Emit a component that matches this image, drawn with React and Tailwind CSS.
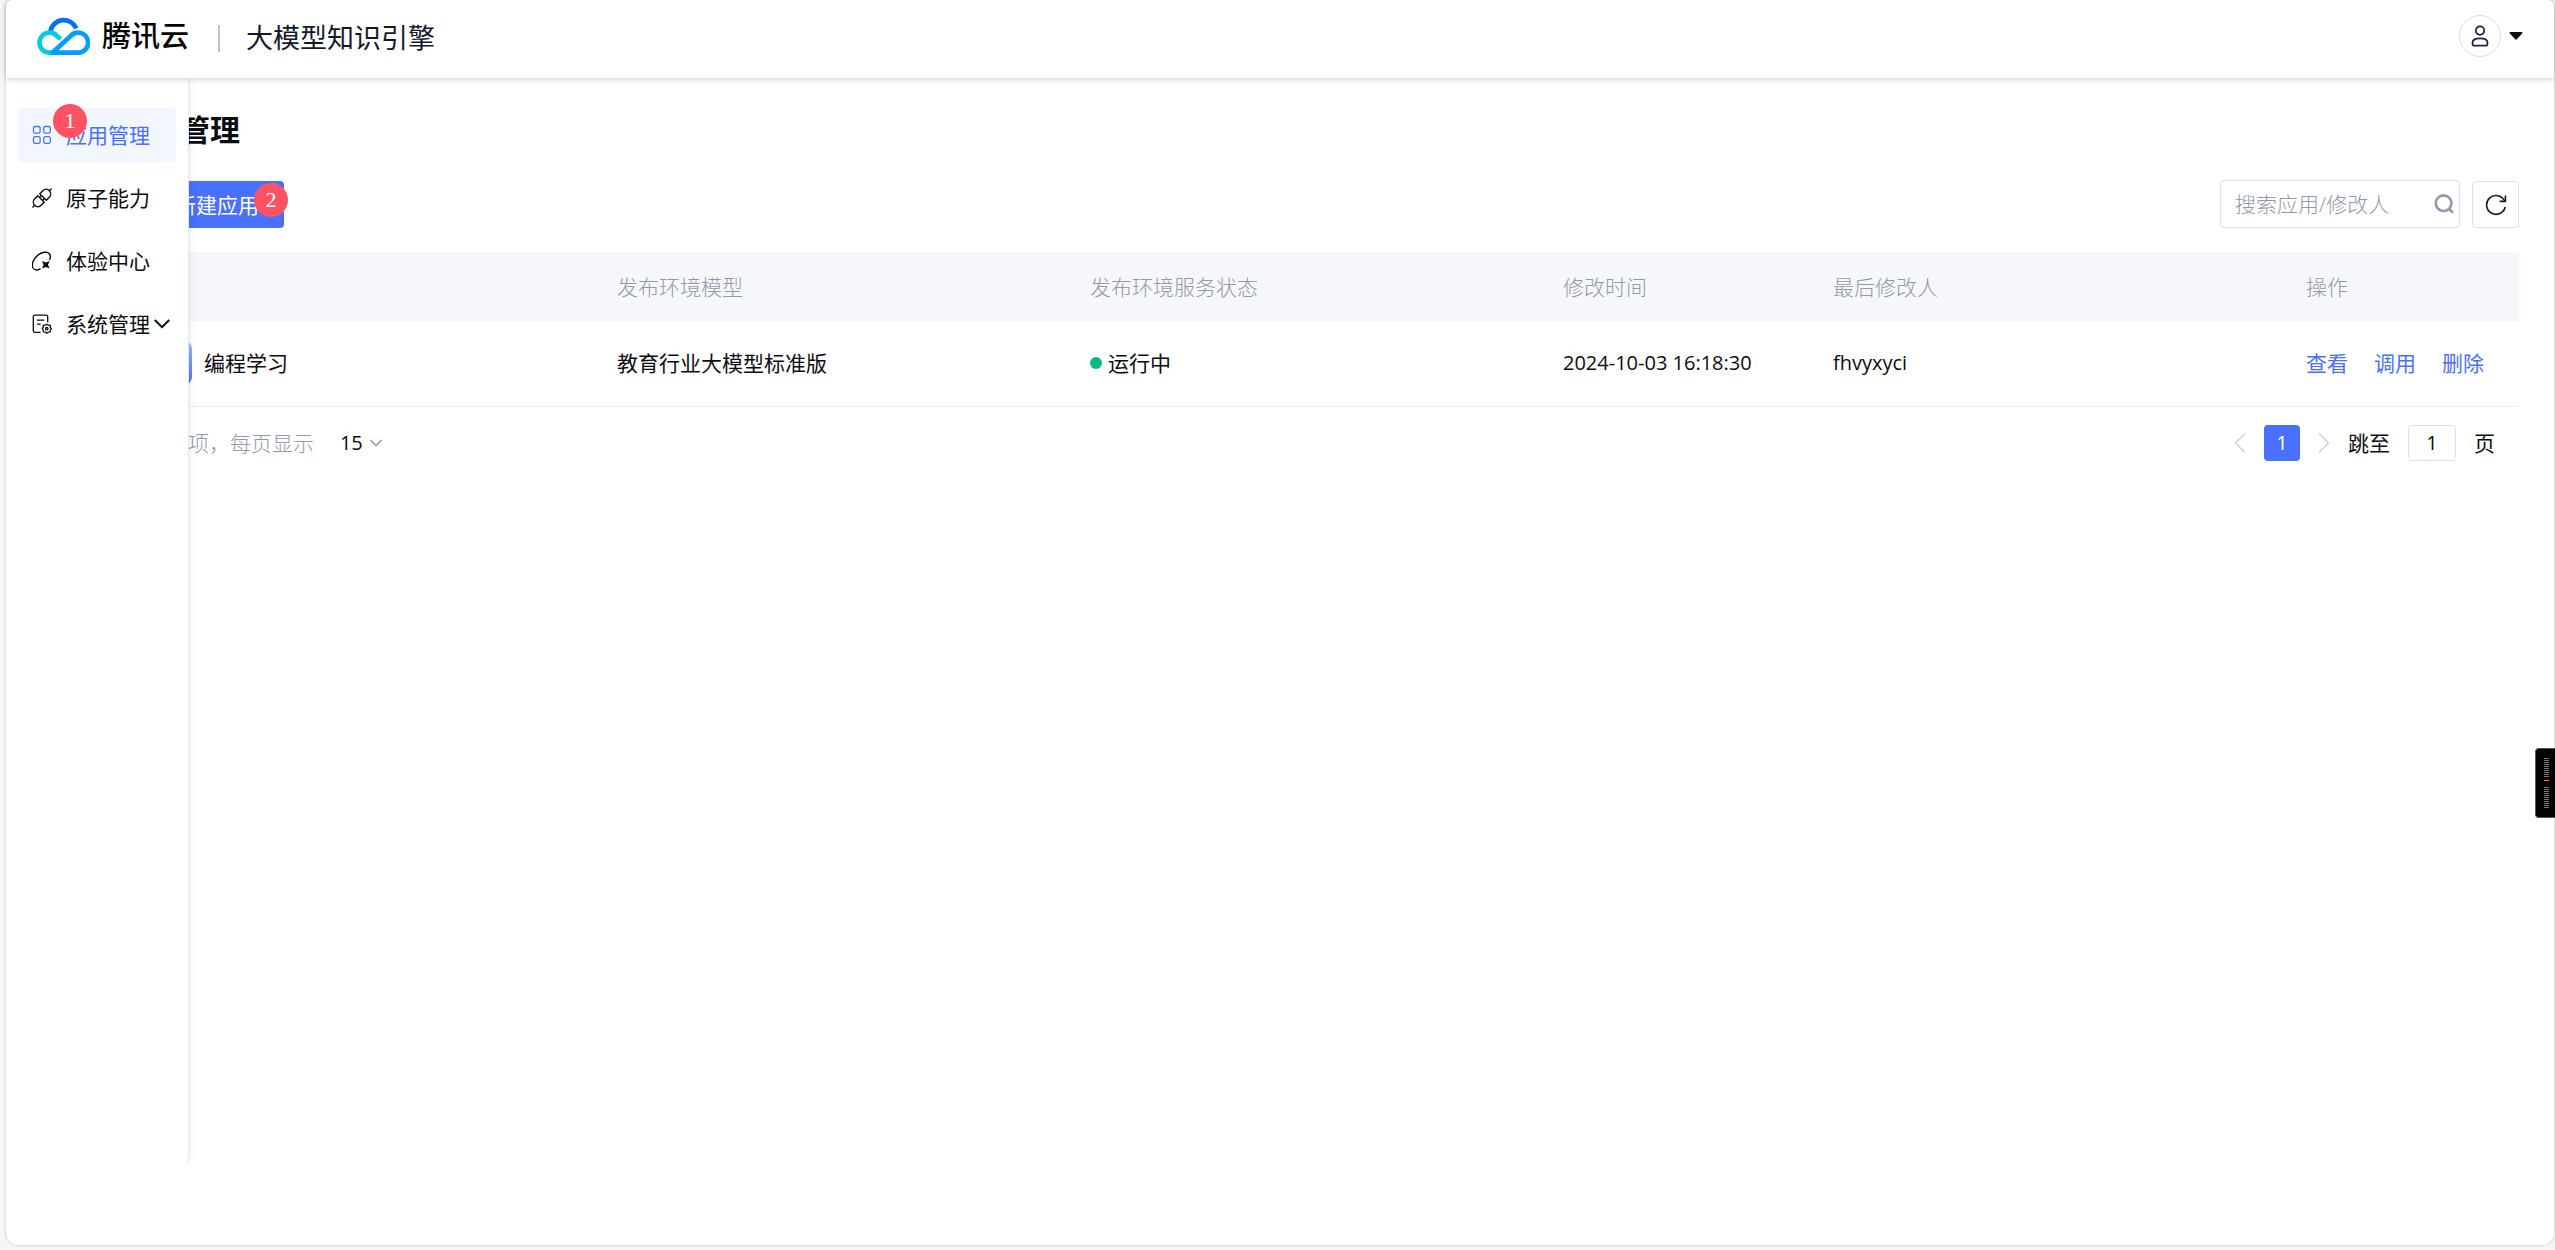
import React, { useState } from "react";
import { ChevronDown, ChevronLeft, ChevronRight } from "lucide-react";

const apps = [
  {
    name: "编程学习",
    model: "教育行业大模型标准版",
    status: "运行中",
    updatedAt: "2024-10-03 16:18:30",
    updatedBy: "fhvyxyci",
  },
];

const CloudLogo = () => (
  <svg viewBox="0 0 159 114" className="w-[53px] h-[38px]" fill="none" strokeWidth="14">
    <path d="M40 43A41 41 0 0 1 118 34" stroke="#0070ff" />
    <path d="M71 66L60 57A30 30 0 1 0 37 107H52" stroke="#00cbdc" />
    <path d="M42 107H122A30 30 0 1 0 101 57L46 107" stroke="#009fff" />
  </svg>
);

const GridIcon = () => (
  <svg viewBox="0 0 20 20" className="size-5 shrink-0" fill="none" stroke="currentColor" strokeWidth="1.3">
    <rect x="1.5" y="1.5" width="6.6" height="6.6" rx="1.5" />
    <rect x="11.7" y="1.5" width="6.6" height="6.6" rx="1.5" />
    <rect x="1.5" y="11.7" width="6.6" height="6.6" rx="1.5" />
    <rect x="11.7" y="11.7" width="6.6" height="6.6" rx="1.5" />
  </svg>
);

const PlugIcon = () => (
  <svg viewBox="0 0 20 20" className="size-5 shrink-0" fill="none" stroke="currentColor" strokeWidth="1.4">
    <g transform="rotate(-45 10 10)">
      <path d="M8.6 5.4V14.6H4.2A4.6 4.6 0 0 1 4.2 5.4Z" />
      <path d="M11.4 5.4V14.6H15.8A4.6 4.6 0 0 0 15.8 5.4Z" />
      <path d="M8.6 8H11.4M8.6 12H11.4M-3.4 10H-.4M20.4 10H23.4" />
    </g>
  </svg>
);

const ExploreIcon = () => (
  <svg viewBox="0 0 20 20" className="size-5 shrink-0" fill="none" stroke="currentColor" strokeWidth="1.4">
    <path d="M8.6 17.6C5.6 19.6 2.5 19.4 1 17C-0.8 13.8 1.2 8 5.6 4.4C9.8 0.8 15.4 0.2 17.4 2.8C18.8 4.6 18.6 6.8 17.4 9" />
    <path
      d="M10 10L13.8 11.6L17.6 10L16 13.8L17.6 17.6L13.8 16L10 17.6L11.6 13.8Z"
      fill="currentColor"
      stroke="none"
    />
  </svg>
);

const SystemIcon = () => (
  <svg viewBox="0 0 20 20" className="size-5 shrink-0" fill="none" stroke="currentColor" strokeWidth="1.3">
    <path d="M8.5 18.3H2.8A1.5 1.5 0 0 1 1.3 16.8V2.7A1.5 1.5 0 0 1 2.8 1.2H14.2A1.5 1.5 0 0 1 15.7 2.7V8.2" />
    <path d="M5 6.2H12.2M5 10.2H8.6" />
    <path d="M14.8 10.2L16.2 11.2L18.2 11.4L18.4 13.4L19.3 14.6L18.4 16L18.2 17.8L16.2 18.2L14.8 19.2L13.4 18.2L11.4 17.8L11.2 16L10.3 14.6L11.2 13.4L11.4 11.4L13.4 11.2Z" />
    <circle cx="14.8" cy="14.7" r="1.2" />
  </svg>
);

const UserIcon = () => (
  <svg viewBox="0 0 18 22" className="w-[18px] h-[22px]" fill="none" stroke="#1b2440" strokeWidth="1.8">
    <circle cx="9" cy="5.6" r="4.2" />
    <path d="M2.8 20.6H15.2Q16.4 20.6 16.4 19.4V17.2C16.4 14.6 13.6 13.4 9 13.4S1.6 14.6 1.6 17.2V19.4Q1.6 20.6 2.8 20.6Z" />
  </svg>
);

const SearchIcon = () => (
  <svg viewBox="0 0 20 20" className="size-5 shrink-0" fill="none" stroke="#9298ae" strokeWidth="2.6">
    <circle cx="9.6" cy="9.2" r="7.8" />
    <path d="M14.8 14.6L19 18.8" />
  </svg>
);

const RefreshIcon = () => (
  <svg viewBox="0 0 22 22" className="size-[22px]" fill="none" stroke="#16181d" strokeWidth="1.6">
    <path d="M20.2 13A9.4 9.4 0 1 1 19.6 7" />
    <path d="M20.4 1.6V7.4H14.6" />
  </svg>
);

const navItems = [
  { label: "应用管理", Icon: GridIcon, active: true, badge: "1" },
  { label: "原子能力", Icon: PlugIcon },
  { label: "体验中心", Icon: ExploreIcon },
  { label: "系统管理", Icon: SystemIcon, expandable: true },
];

const StepBadge = ({ children, className }) => (
  <span
    className={`absolute flex size-[34px] items-center justify-center rounded-full bg-[#ff5364] font-['Liberation_Serif',serif] text-[22px] leading-none text-white ${className}`}
  >
    {children}
  </span>
);

const Header = () => (
  <header className="relative z-20 flex h-[78px] shrink-0 items-center justify-between rounded-t-md bg-white pr-[31px] pl-[31px] pb-[6px] shadow-[0_1px_6px_rgba(0,0,0,0.2)]">
    <div className="flex items-center">
      <CloudLogo />
      <span className="ml-3 text-[29px] leading-9 font-medium text-black">腾讯云</span>
      <span className="ml-[29px] mt-1 h-[27px] w-[2px] bg-[#bfc1ca]" />
      <h1 className="ml-[26px] mt-1 text-[27px] leading-9 text-[#111a2c]">大模型知识引擎</h1>
    </div>
    <button type="button" aria-label="账号" className="flex items-center gap-2">
      <span className="flex size-[42px] items-center justify-center rounded-full border border-[#dcdee8]">
        <UserIcon />
      </span>
      <svg viewBox="0 0 14 8" className="w-[14px] h-2" fill="#111">
        <path d="M1.2 0H12.8Q14 .3 13.2 1.4L7.8 7.3Q7 8 6.2 7.3L.8 1.4Q0 .3 1.2 0Z" />
      </svg>
    </button>
  </header>
);

const Sidebar = () => (
  <aside className="relative z-10 mb-[82px] -mr-[69px] w-[183px] shrink-0 border-r border-[#e6e7ea] bg-white pt-[30px] pr-3 pl-3 shadow-[6px_0_6px_-4px_rgba(0,0,0,0.07)]">
    <nav className="flex flex-col gap-[9px]">
      {navItems.map(({ label, Icon, active, badge, expandable }) => (
        <a
          key={label}
          href="#"
          className={`relative flex h-[54px] items-center rounded pl-[14px] whitespace-nowrap ${
            active ? "bg-[#f1f6ff] text-[#4a70ff]" : "text-[#0b0c10]"
          }`}
        >
          <Icon />
          <span className="ml-[14px]">{label}</span>
          {expandable && (
            <svg viewBox="0 0 16 10" className="ml-1 h-[10px] w-4 shrink-0" fill="none" stroke="currentColor" strokeWidth="2">
              <path d="M.8 1L8 8.2L15.2 1" />
            </svg>
          )}
          {badge && <StepBadge className="left-[35px] -top-1">{badge}</StepBadge>}
        </a>
      ))}
    </nav>
  </aside>
);

const Toolbar = () => {
  const [keyword, setKeyword] = useState("");

  return (
    <div className="mb-6 flex items-end justify-between">
      <button
        type="button"
        className="relative flex h-[47px] w-[164px] items-center justify-end rounded bg-[#4a70ff] pr-[25px] text-white"
      >
        新建应用
        <StepBadge className="-right-1 top-[2px]">2</StepBadge>
      </button>
      <div className="flex items-end gap-3">
        <label className="flex h-12 w-[240px] items-center rounded border border-[#dfe1e8] pr-[5px] pl-[14px]">
          <input
            type="text"
            aria-label="搜索应用/修改人"
            placeholder="搜索应用/修改人"
            value={keyword}
            onChange={(e) => setKeyword(e.target.value)}
            className="min-w-0 flex-1 font-light outline-none placeholder:text-[#9298ae]"
          />
          <SearchIcon />
        </label>
        <button
          type="button"
          aria-label="刷新"
          className="flex size-[47px] items-center justify-center rounded border border-[#dfe1e8]"
        >
          <RefreshIcon />
        </button>
      </div>
    </div>
  );
};

const AppTable = () => (
  <table className="w-full table-fixed text-left">
    <thead>
      <tr className="h-[69px] bg-[#f6f7fa] text-[#9298ae]">
        <th className="w-[482px] pl-[15px] font-light">名称</th>
        <th className="pl-[15px] font-light">发布环境模型</th>
        <th className="pl-[15px] font-light">发布环境服务状态</th>
        <th className="w-[270px] pl-[15px] font-light">修改时间</th>
        <th className="pl-[15px] font-light">最后修改人</th>
        <th className="w-[228px] pl-[15px] font-light">操作</th>
      </tr>
    </thead>
    <tbody>
      {apps.map((app) => (
        <tr key={app.name} className="h-[85px] border-b border-[#e9ebef]">
          <td className="pl-7">
            <div className="flex items-center gap-3">
              <span className="size-11 rounded-lg bg-linear-to-b from-[#a3b6ff] to-[#4a70ff]" />
              {app.name}
            </div>
          </td>
          <td className="pl-[15px]">{app.model}</td>
          <td className="pl-[15px]">
            <div className="flex items-center gap-[6px]">
              <span className="size-3 rounded-full bg-[#0fb881]" />
              {app.status}
            </div>
          </td>
          <td className="pl-[15px] text-xl">{app.updatedAt}</td>
          <td className="pl-[15px] text-xl">{app.updatedBy}</td>
          <td className="pl-[15px]">
            <div className="flex gap-[26px] text-[#4a70ff]">
              <a href="#">查看</a>
              <a href="#">调用</a>
              <a href="#">删除</a>
            </div>
          </td>
        </tr>
      ))}
    </tbody>
  </table>
);

const Pagination = () => {
  const [pageSize, setPageSize] = useState("15");
  const [page, setPage] = useState("1");

  return (
    <div className="flex items-center justify-between pt-[18px] pr-6 pl-6">
      <div className="flex items-center">
        <label htmlFor="page-size" className="font-light text-[#9298ae]">
          共 1 项，每页显示
        </label>
        <div className="ml-[26px] flex items-center">
          <select
            id="page-size"
            value={pageSize}
            onChange={(e) => setPageSize(e.target.value)}
            className="w-[26px] appearance-none text-xl outline-none"
          >
            <option>15</option>
            <option>30</option>
            <option>50</option>
          </select>
          <ChevronDown className="pointer-events-none size-5 text-[#9298ae]" strokeWidth={2} />
        </div>
      </div>
      <div className="flex items-center">
        <button type="button" aria-label="上一页" className="text-[#cfd2dc]">
          <ChevronLeft className="size-9" strokeWidth={1} />
        </button>
        <button type="button" className="ml-[6px] size-9 rounded bg-[#4a70ff] text-xl text-white">
          1
        </button>
        <button type="button" aria-label="下一页" className="ml-[6px] text-[#cfd2dc]">
          <ChevronRight className="size-9" strokeWidth={1} />
        </button>
        <label htmlFor="page-jump" className="ml-[6px]">
          跳至
        </label>
        <input
          id="page-jump"
          type="text"
          value={page}
          onChange={(e) => setPage(e.target.value)}
          className="mx-[18px] h-9 w-12 rounded border border-[#dfe1e8] text-center text-xl outline-none"
        />
        <span>页</span>
      </div>
    </div>
  );
};

// small level meter docked to the right edge of the window
const MeterDock = () => (
  <div className="fixed top-[748px] right-0 z-30 flex h-[70px] w-5 flex-col justify-center gap-[6px] rounded-l border border-r-0 border-[#555] bg-[#050505] pl-2">
    <svg viewBox="0 0 5 23" className="h-[23px] w-[5px]">
      <path d="M2.5 0V20" stroke="#77787a" strokeWidth="5" strokeDasharray="1 1" />
      <path d="M0 22.5H5" stroke="#f08a12" />
    </svg>
    <svg viewBox="0 0 5 21" className="h-[21px] w-[5px]">
      <path d="M2.5 0V21" stroke="#77787a" strokeWidth="5" strokeDasharray="1 1" />
    </svg>
  </div>
);

const App = () => {
  return (
    <div className="flex min-h-screen flex-col bg-[#f6f6f6] pr-px pb-[5px] pl-[6px] font-['Open_Sans','Noto_Sans_CJK_SC',sans-serif] text-[21px] leading-8 text-[#0b0c10]">
      <div className="flex flex-1 flex-col rounded-t-md rounded-b-xl bg-white shadow-[0_0_3px_rgba(0,0,0,0.25)]">
        <Header />
        <div className="flex flex-1">
          <Sidebar />
          <main className="min-w-0 flex-1 pt-[34px] pr-[35px]">
            <h2 className="mb-8 text-[30px] leading-9 font-bold">应用管理</h2>
            <Toolbar />
            <AppTable />
            <Pagination />
          </main>
        </div>
      </div>
      <MeterDock />
    </div>
  );
};

export default App;
